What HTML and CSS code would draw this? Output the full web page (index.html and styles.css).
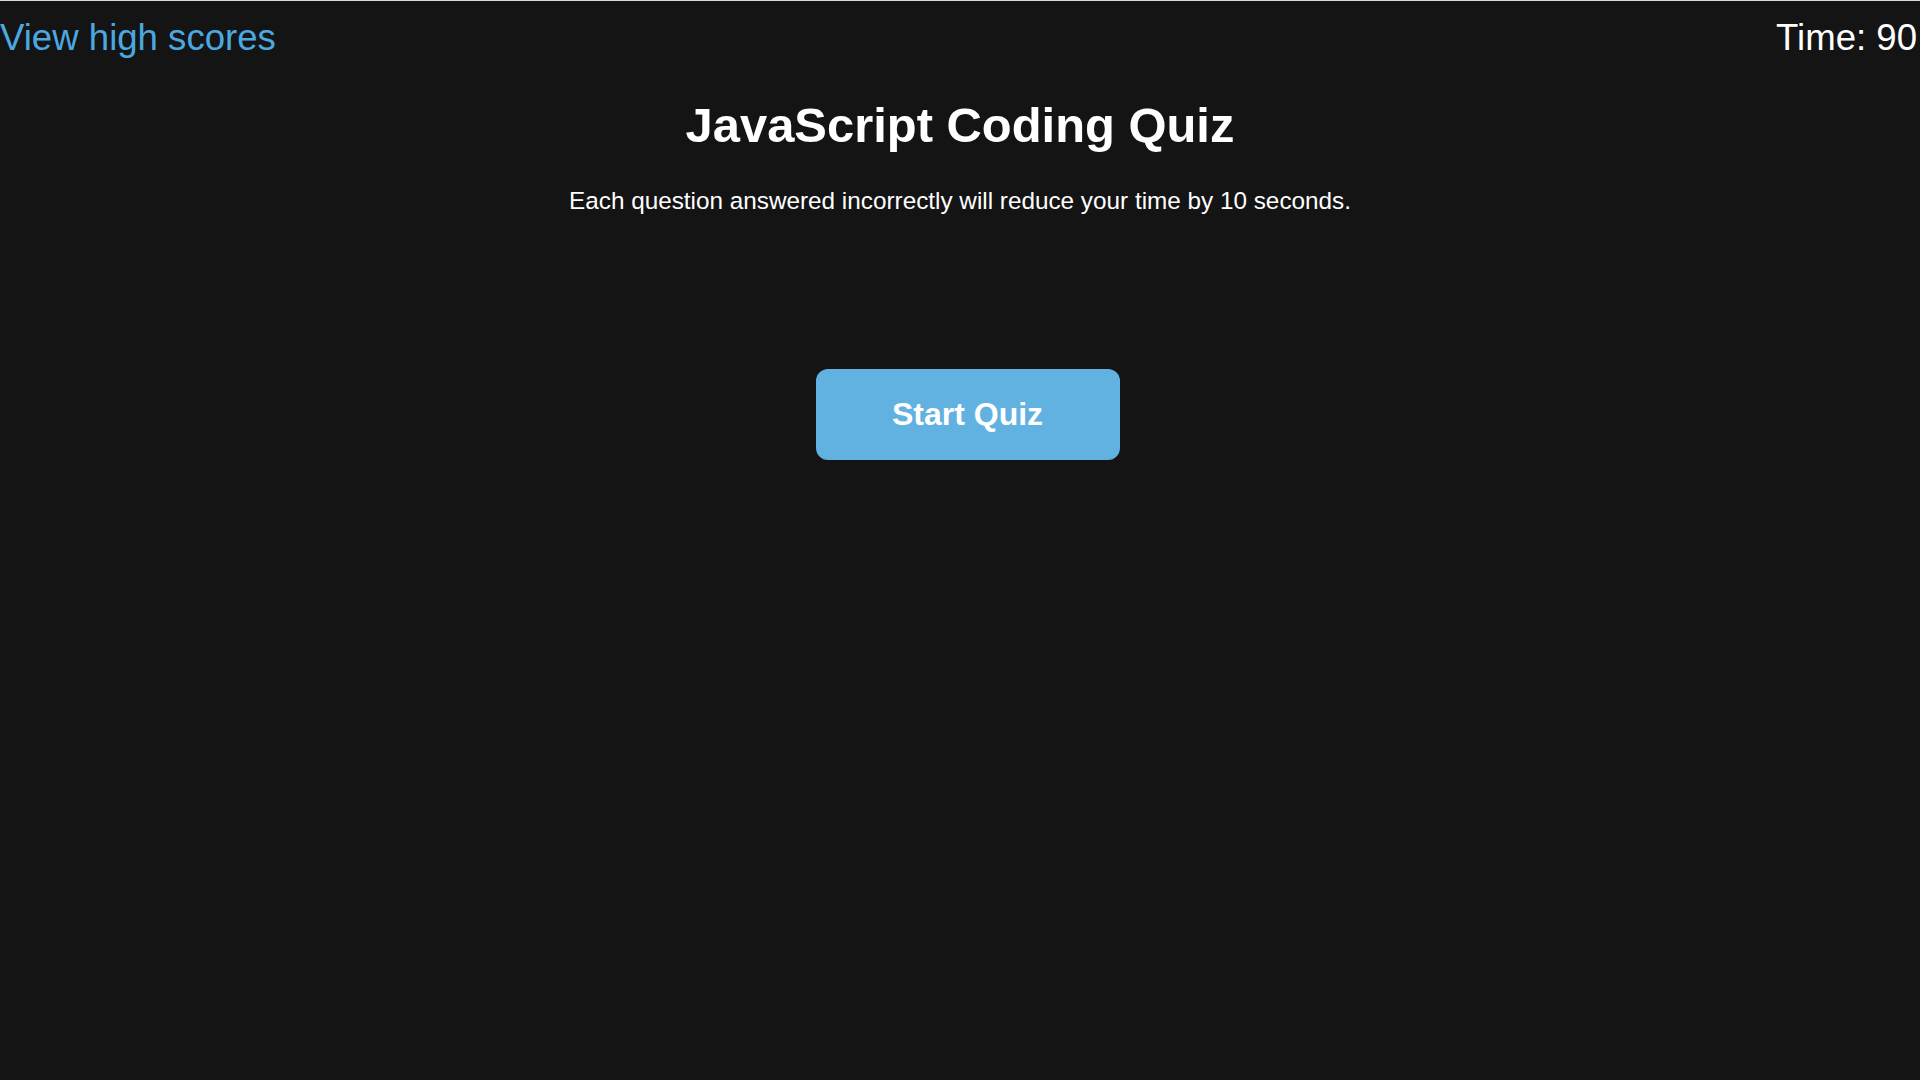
FILE: index.html
```html
<!DOCTYPE html>
<html lang="en">
<head>
<meta charset="utf-8">
<title>JavaScript Coding Quiz</title>
<link rel="stylesheet" href="styles.css">
</head>
<body>
<header class="top-bar">
  <a class="scores-link" href="#">View high scores</a>
  <div class="timer">Time: <span class="time-value">90</span></div>
</header>
<main class="intro">
  <h1 class="quiz-title">JavaScript Coding Quiz</h1>
  <p class="quiz-desc">Each question answered incorrectly will reduce your time by 10 seconds.</p>
  <button class="start-btn" type="button">Start Quiz</button>
</main>
</body>
</html>
```
FILE: styles.css
```css
html, body {
  margin: 0;
  padding: 0;
  height: 100%;
}
body {
  background: #141414;
  color: #ffffff;
  font-family: Arial, "Liberation Sans", Helvetica, sans-serif;
  border-top: 1px solid #d9d9d9;
  box-sizing: border-box;
}
.top-bar {
  display: flex;
  justify-content: space-between;
  align-items: baseline;
  padding: 16px 3px 0 0;
  font-size: 36.6px;
  line-height: 41px;
}
.scores-link {
  color: #4ba8e0;
  text-decoration: none;
}
.timer {
  color: #ffffff;
}
.intro {
  display: flex;
  flex-direction: column;
  align-items: center;
  text-align: center;
}
.quiz-title {
  margin: 40px 0 0;
  font-size: 48.9px;
  line-height: 55px;
  font-weight: bold;
}
.quiz-desc {
  margin: 34px 0 0;
  font-size: 24.3px;
  line-height: 28px;
}
.start-btn {
  margin: 154px 0 0 15px;
  width: 304px;
  height: 91px;
  border: none;
  border-radius: 12px;
  background: #61b2e1;
  color: #ffffff;
  font-family: Arial, "Liberation Sans", Helvetica, sans-serif;
  font-size: 32px;
  font-weight: bold;
  cursor: pointer;
}
```
